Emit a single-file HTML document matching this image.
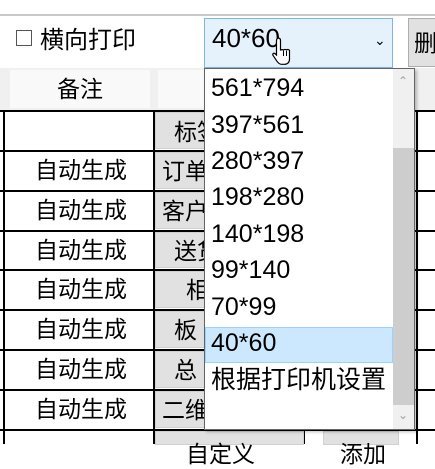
<!DOCTYPE html>
<html><head><meta charset="utf-8"><style>
*{margin:0;padding:0;box-sizing:border-box}
body{width:435px;height:444px;overflow:hidden;background:#fff;position:relative;font-family:"Liberation Sans","Noto Sans CJK SC",sans-serif;color:#000}
.a{position:absolute}
.hl{position:absolute;height:1.5px;background:#000}
.vl{position:absolute;width:1.5px;background:#000}
.t{position:absolute;font-size:23px;line-height:30px;white-space:nowrap}
.btn{position:absolute;background:#e1e1e1;border:1px solid #d0d0d0;overflow:hidden}
.it{position:absolute;left:211px;font-size:25px;line-height:30px;white-space:nowrap}
</style></head><body>
<div class="a" style="left:0;top:14px;width:435px;height:2px;background:#c8c8c8"></div>
<div class="a" style="left:16px;top:30px;width:16px;height:16px;border:1px solid #555"></div>
<div class="t" style="left:40px;top:26px;font-size:24px">横向打印</div>
<div class="a" style="left:204px;top:18px;width:189px;height:50px;background:#e5f1fb;border:1px solid #7eb4ea"></div>
<div class="a" style="left:212px;top:22px;font-size:26px;line-height:32px">40*60</div>
<div class="a" style="left:374px;top:32px;font-size:14px">&#8964;</div>
<svg class="a" style="left:272px;top:36px" width="28" height="32" viewBox="0 0 28 32"><path d="M6 2c1.5 0 2.5 1 2.5 2.5v10c.5-1 2-1.2 3 -.3c.6-.9 2-1 3-.2c.7-.8 2.2-.7 3 .3v9c0 3-2 5-5 5h-3c-2 0-3-1-4.5-3l-4-6c-.8-1.2 .5-2.6 1.8-1.8l1.7 1.5v-14.5c0-1.5 1-2.5 2.5-2.5z" fill="#fff" stroke="#000" stroke-width="1.2"/><path d="M11.5 15v5M14.5 15v5M17.5 15v5" stroke="#000" stroke-width="1"/></svg>
<div class="a" style="left:408px;top:18px;width:30px;height:49px;background:#e1e1e1;border:1px solid #adadad"></div>
<div class="t" style="left:414px;top:28px">删</div>
<div class="a" style="left:0;top:68px;width:435px;height:43px;background:#f0f0f0"></div>
<div class="a" style="left:10px;top:70px;width:140px;height:38px;background:#f9f9f9"></div>
<div class="a" style="left:158px;top:70px;width:46px;height:38px;background:#f9f9f9"></div>
<div class="t" style="left:57px;top:74px">备注</div>
<div class="hl" style="left:0;top:110px;width:435px"></div>
<div class="hl" style="left:0;top:150px;width:435px"></div>
<div class="hl" style="left:0;top:190px;width:435px"></div>
<div class="hl" style="left:0;top:230px;width:435px"></div>
<div class="hl" style="left:0;top:269px;width:435px"></div>
<div class="hl" style="left:0;top:309px;width:435px"></div>
<div class="hl" style="left:0;top:349px;width:435px"></div>
<div class="hl" style="left:0;top:389px;width:435px"></div>
<div class="hl" style="left:0;top:429px;width:435px"></div>
<div class="vl" style="left:3px;top:110px;height:334px"></div>
<div class="vl" style="left:153px;top:110px;height:334px"></div>
<div class="vl" style="left:303px;top:429px;height:15px"></div>
<div class="vl" style="left:416px;top:110px;height:334px"></div>
<div class="btn" style="left:155px;top:112px;width:149px;height:37px"></div>
<div class="btn" style="left:155px;top:152px;width:149px;height:37px"></div>
<div class="btn" style="left:155px;top:192px;width:149px;height:37px"></div>
<div class="btn" style="left:155px;top:232px;width:149px;height:36px"></div>
<div class="btn" style="left:155px;top:271px;width:149px;height:37px"></div>
<div class="btn" style="left:155px;top:311px;width:149px;height:37px"></div>
<div class="btn" style="left:155px;top:351px;width:149px;height:37px"></div>
<div class="btn" style="left:155px;top:391px;width:149px;height:37px"></div>
<div class="btn" style="left:155px;top:431px;width:149px;height:14px"></div>
<div class="btn" style="left:323px;top:431px;width:76px;height:14px"></div>
<div class="t" style="left:174px;top:117px">标签</div>
<div class="t" style="left:162px;top:156px">订单</div>
<div class="t" style="left:162px;top:196px">客户</div>
<div class="t" style="left:174px;top:236px">送货</div>
<div class="t" style="left:186px;top:275px">相</div>
<div class="t" style="left:174px;top:315px">板</div>
<div class="t" style="left:174px;top:355px">总</div>
<div class="t" style="left:162px;top:395px">二维</div>
<div class="t" style="left:186px;top:439px">自定义</div>
<div class="t" style="left:340px;top:439px">添加</div>
<div class="t" style="left:35px;top:155px">自动生成</div>
<div class="t" style="left:35px;top:195px">自动生成</div>
<div class="t" style="left:35px;top:235px">自动生成</div>
<div class="t" style="left:35px;top:274px">自动生成</div>
<div class="t" style="left:35px;top:314px">自动生成</div>
<div class="t" style="left:35px;top:354px">自动生成</div>
<div class="t" style="left:35px;top:394px">自动生成</div>
<div class="a" style="left:204px;top:68px;width:211px;height:362px;background:#fff;border:1px solid #646464;box-shadow:2px 2px 3px rgba(0,0,0,.25)"></div>
<div class="a" style="left:393px;top:69px;width:21px;height:360px;background:#f0f0f0"></div>
<div class="a" style="left:393px;top:148px;width:21px;height:257px;background:#cdcdcd"></div>
<div class="a" style="left:398px;top:74px;font-size:12px;color:#a0a0a0">&#8963;</div>
<div class="a" style="left:398px;top:408px;font-size:12px;color:#a0a0a0">&#8964;</div>
<div class="a" style="left:205px;top:327px;width:188px;height:36px;background:#cce8ff;border:1px solid #99d1ff"></div>
<div class="it" style="top:73px">561*794</div>
<div class="it" style="top:110px">397*561</div>
<div class="it" style="top:146px">280*397</div>
<div class="it" style="top:182px">198*280</div>
<div class="it" style="top:219px">140*198</div>
<div class="it" style="top:255px">99*140</div>
<div class="it" style="top:292px">70*99</div>
<div class="it" style="top:328px">40*60</div>
<div class="it" style="top:365px">根据打印机设置</div>
</body></html>
